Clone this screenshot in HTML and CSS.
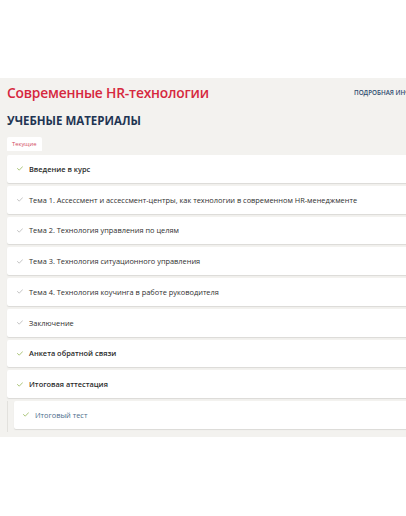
FILE: index.html
```html
<!DOCTYPE html>
<html lang="ru">
<head>
<meta charset="utf-8">
<link rel="stylesheet" href="styles.css">
</head>
<body>
<div class="top"></div>
<div class="panel">
  <div class="head">
    <h1 class="title">Современные HR-технологии</h1>
    <a class="more">ПОДРОБНАЯ ИНФОРМАЦИЯ</a>
  </div>
  <h2 class="section">УЧЕБНЫЕ МАТЕРИАЛЫ</h2>
  <div class="tabs"><span class="tab">Текущие</span></div>
  <ul class="list">
    <li class="item bold"><svg class="chk done" viewBox="0 0 8 6"><polyline points="0.6,3 3,5.2 7.4,0.6"/></svg><span>Введение в курс</span></li>
    <li class="item"><svg class="chk" viewBox="0 0 8 6"><polyline points="0.6,3 3,5.2 7.4,0.6"/></svg><span>Тема 1. Ассессмент и ассессмент-центры, как технологии в современном HR-менеджменте</span></li>
    <li class="item"><svg class="chk" viewBox="0 0 8 6"><polyline points="0.6,3 3,5.2 7.4,0.6"/></svg><span>Тема 2. Технология управления по целям</span></li>
    <li class="item"><svg class="chk" viewBox="0 0 8 6"><polyline points="0.6,3 3,5.2 7.4,0.6"/></svg><span>Тема 3. Технология ситуационного управления</span></li>
    <li class="item"><svg class="chk" viewBox="0 0 8 6"><polyline points="0.6,3 3,5.2 7.4,0.6"/></svg><span>Тема 4. Технология коучинга в работе руководителя</span></li>
    <li class="item"><svg class="chk" viewBox="0 0 8 6"><polyline points="0.6,3 3,5.2 7.4,0.6"/></svg><span>Заключение</span></li>
    <li class="item bold"><svg class="chk done" viewBox="0 0 8 6"><polyline points="0.6,3 3,5.2 7.4,0.6"/></svg><span>Анкета обратной связи</span></li>
    <li class="group">
      <div class="item bold"><svg class="chk done" viewBox="0 0 8 6"><polyline points="0.6,3 3,5.2 7.4,0.6"/></svg><span>Итоговая аттестация</span></div>
      <div class="sub">
        <div class="item child"><svg class="chk done" viewBox="0 0 8 6"><polyline points="0.6,3 3,5.2 7.4,0.6"/></svg><span>Итоговый тест</span></div>
      </div>
    </li>
  </ul>
</div>
</body>
</html>
```
FILE: styles.css
```css
html, body {
  margin: 0;
  padding: 0;
  background: #ffffff;
  overflow: hidden;
}
body {
  width: 406px;
  height: 516px;
  font-family: "Open Sans", "Noto Sans", sans-serif;
}
.top {
  height: 78px;
}
.panel {
  width: 470px;
  background: #f3f2ef;
  padding: 1px 0 5px 7px;
  box-sizing: border-box;
}
.head {
  display: grid;
  grid-template-columns: 347px auto;
  align-items: center;
  height: 26px;
}
.title {
  margin: 0;
  font-size: 13.8px;
  font-weight: 600;
  color: #d6283e;
  letter-spacing: -0.2px;
  white-space: nowrap;
}
.more {
  font-size: 6.3px;
  font-weight: 600;
  color: #2c4a6e;
  white-space: nowrap;
}
.section {
  margin: 8px 0 0;
  font-size: 11.5px;
  font-weight: 700;
  color: #1f3553;
  line-height: 16px;
}
.tabs {
  margin-top: 8px;
  display: flex;
}
.tab {
  background: #ffffff;
  color: #d24a5e;
  font-size: 5.8px;
  padding: 0 5px;
  height: 14px;
  line-height: 14px;
  border-radius: 2px 2px 0 0;
}
.list {
  list-style: none;
  margin: 4px 0 0;
  padding: 0;
  display: flex;
  flex-direction: column;
  gap: 3px;
}
.item {
  display: flex;
  align-items: center;
  gap: 6px;
  height: 27.75px;
  padding-left: 10px;
  background: #ffffff;
  box-shadow: 0 1px 1px rgba(0,0,0,0.10);
  border-radius: 2px 0 0 2px;
  font-size: 7.4px;
  color: #2f2f2f;
  white-space: nowrap;
}
.item.bold {
  font-weight: 600;
  color: #2a2a2a;
}
.chk {
  width: 6px;
  height: 5px;
  flex: none;
  fill: none;
  stroke: #b8b8b8;
  stroke-width: 1.1;
  stroke-linecap: round;
  stroke-linejoin: round;
}
.chk.done {
  stroke: #9dbb62;
}
.group {
  display: flex;
  flex-direction: column;
}
.sub {
  margin-top: 3px;
  border-left: 1px solid #e2e1dd;
  padding: 0 0 3px 6px;
}
.item.child {
  color: #4d6d8c;
  font-weight: 400;
  padding-left: 9px;
}
```
